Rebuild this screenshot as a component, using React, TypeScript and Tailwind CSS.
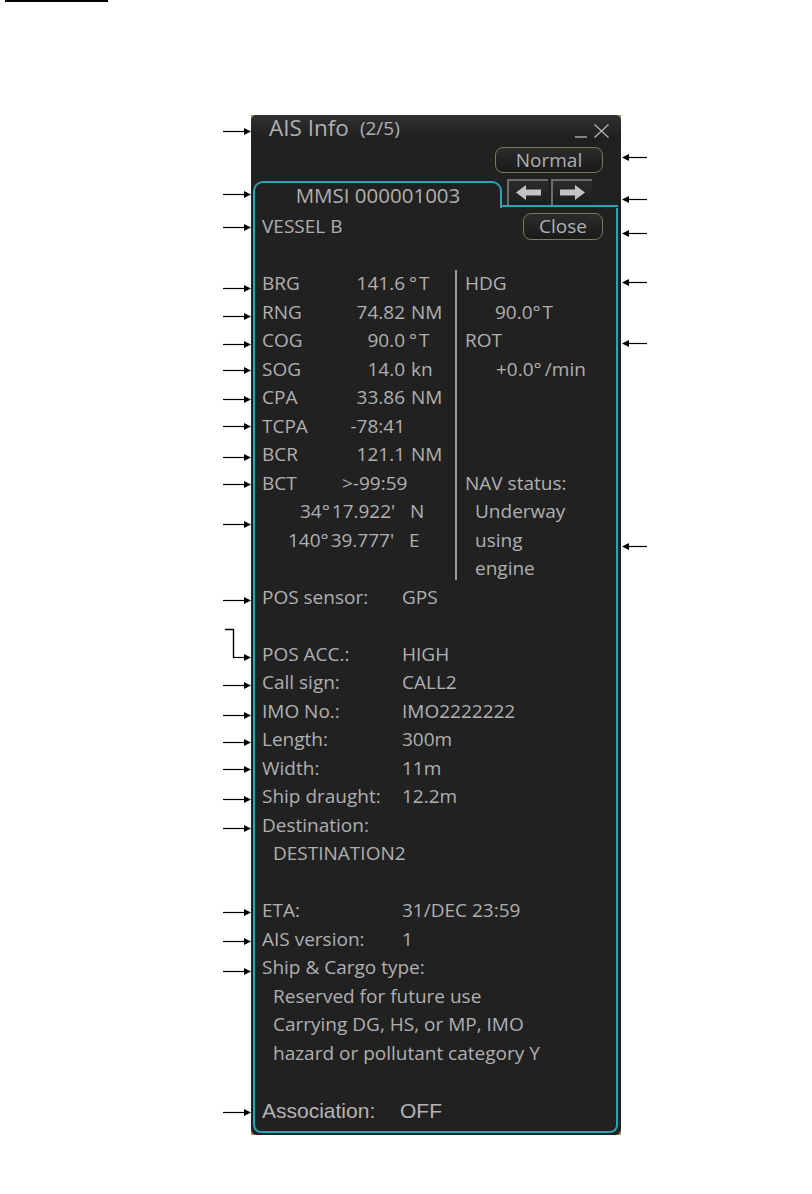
import React from "react";

const TEAL = "border-[#2ba3b4]";

const NAV_LEFT: [string, string, string][] = [
  ["BRG", "141.6", "°\u200aT"],
  ["RNG", "74.82", "NM"],
  ["COG", "90.0", "°\u200aT"],
  ["SOG", "14.0", "kn"],
  ["CPA", "33.86", "NM"],
  ["TCPA", "-78:41", ""],
  ["BCR", "121.1", "NM"],
  ["BCT", ">-99:59", ""],
];

const DETAILS: [string, string][] = [
  ["Call sign:", "CALL2"],
  ["IMO No.:", "IMO2222222"],
  ["Length:", "300m"],
  ["Width:", "11m"],
  ["Ship draught:", "12.2m"],
];

// annotation arrows, y measured from the top of the panel
const LEFT_ARROWS = [16, 79, 112, 173, 201, 229, 255, 284, 311, 342, 369, 409, 485, 542, 570, 600, 627, 654, 684, 713, 797, 826, 856, 997];
const RIGHT_ARROWS = [42, 84, 118, 167, 228, 431];

function LeftCallouts() {
  return (
    <svg width="29" height="1020" viewBox="0 0 29 1020" className="shrink-0">
      {LEFT_ARROWS.map(y => (
        <g key={y}>
          <line x1={y === 542 ? 11 : 1} y1={y + 0.5} x2={23} y2={y + 0.5} stroke="#000" strokeWidth="1.2" />
          <polygon points={`22,${y - 3} 29,${y + 0.5} 22,${y + 4}`} fill="#000" />
        </g>
      ))}
      <polyline points="3,514.5 11.5,514.5 11.5,542.5" fill="none" stroke="#000" strokeWidth="1.4" />
    </svg>
  );
}

function RightCallouts() {
  return (
    <svg width="27" height="1020" viewBox="0 0 27 1020" className="shrink-0">
      {RIGHT_ARROWS.map(y => (
        <g key={y}>
          <line x1={7} y1={y + 0.5} x2={26} y2={y + 0.5} stroke="#000" strokeWidth="1.2" />
          <polygon points={`8,${y - 3} 1,${y + 0.5} 8,${y + 4}`} fill="#000" />
        </g>
      ))}
    </svg>
  );
}

function ArrowButton({ dir }: { dir: "left" | "right" }) {
  return (
    <div className="w-[41px] h-[26px] flex items-center justify-center border-t-2 border-l-2 border-[#6c6c6c] bg-gradient-to-b from-[#2c2c2c] to-[#1c1c1c]">
      <svg width="25" height="15" viewBox="0 0 25 15">
        {dir === "left" ? (
          <polygon points="0,7.5 10,0 10,4.5 25,4.5 25,10.5 10,10.5 10,15" fill="#c4c4c4" />
        ) : (
          <polygon points="25,7.5 15,0 15,4.5 0,4.5 0,10.5 15,10.5 15,15" fill="#c4c4c4" />
        )}
      </svg>
    </div>
  );
}

const Row = ({ children, className = "" }: { children?: React.ReactNode; className?: string }) => (
  <div className={`flex h-[28.5px] items-center whitespace-pre ${className}`}>{children}</div>
);

export default function App() {
  return (
    <div className="w-[812px] h-[1194px] bg-white font-['Open_Sans','Noto_Sans',sans-serif]">
      <div className="ml-[5px] w-[103px] h-[2px] bg-black" />

      <div className="flex mt-[113px] ml-[222px]">
        <LeftCallouts />

        {/* AIS Info panel */}
        <div className="w-[370px] h-[1020px] bg-[#a3946f] shrink-0">
          <div className="w-full h-full rounded-[6px] bg-[#212121] flex flex-col text-[#b0b0b0] text-[19px]">
            {/* title bar */}
            <div className="h-[26px] flex items-center pl-[18px] pr-[12px] rounded-t-[6px] bg-gradient-to-b from-[#303030] to-[#1e1e1e]">
              <span className="text-[22.5px] leading-[26px]">AIS Info</span>
              <span className="ml-[11px] text-[19px] leading-[26px]">(2/5)</span>
              <div className="ml-auto flex items-end gap-[7px] pt-[6px]">
                <svg width="12" height="14" viewBox="0 0 12 14">
                  <line x1="0" y1="13" x2="12" y2="13" stroke="#b8b8b8" strokeWidth="1.3" />
                </svg>
                <svg width="15" height="14" viewBox="0 0 15 14">
                  <line x1="0.5" y1="0.5" x2="14.5" y2="13.5" stroke="#b8b8b8" strokeWidth="1.2" />
                  <line x1="14.5" y1="0.5" x2="0.5" y2="13.5" stroke="#b8b8b8" strokeWidth="1.2" />
                </svg>
              </div>
            </div>

            {/* Normal button */}
            <div className="flex justify-end pr-[18px] pt-[6px]">
              <button className="w-[108px] h-[26px] rounded-[8px] border-[1.5px] border-[#7c7760] bg-gradient-to-b from-[#2c2c2c] to-[#1a1a1a] text-[19px] leading-none text-[#b0b0b0]">
                Normal
              </button>
            </div>

            {/* tab row */}
            <div className="flex mt-[8px] ml-[2px] mr-[3px]">
              <div className={`w-[249px] h-[26.5px] border-t-2 border-l-2 border-r-2 ${TEAL} rounded-t-[10px] flex items-center justify-center text-[20.5px] leading-none pl-[1px]`}>
                MMSI 000001003
              </div>
              <div className={`flex-1 h-[26.5px] border-b-2 ${TEAL} flex items-end gap-[3px] pl-[5px] -mt-[1px]`}>
                <ArrowButton dir="left" />
                <ArrowButton dir="right" />
              </div>
            </div>

            {/* content */}
            <div className={`flex-1 ml-[2px] mr-[3px] mb-[2px] border-l-2 border-r-2 border-b-2 ${TEAL} rounded-b-[8px] pt-[5px] leading-none`}>
              <Row className="pl-[7px] pr-[13px] justify-between">
                <span>VESSEL B</span>
                <button className="w-[80px] h-[27px] rounded-[8px] border-[1.5px] border-[#7c7760] bg-gradient-to-b from-[#2c2c2c] to-[#1a1a1a] text-[19px] leading-none text-[#b0b0b0]">
                  Close
                </button>
              </Row>
              <Row />

              <div className="flex">
                <div className="w-[200px] pl-[7px]">
                  {NAV_LEFT.map(([label, value, unit]) => (
                    <Row key={label}>
                      <span className="w-[80px]">{label}</span>
                      <span className="w-[63px] text-right">{value}</span>
                      {unit && <span className={unit === "NM" || unit === "kn" ? "ml-[6px]" : "ml-[4px]"}>{unit}</span>}
                    </Row>
                  ))}
                  <Row className="pl-[38px]">{"34°\u200a17.922'   N"}</Row>
                  <Row className="pl-[26px]">{"140°\u200a39.777'   E"}</Row>
                  <Row />
                </div>
                <div className="w-[2px] bg-[#9a9a9a] mb-[3px]" />
                <div className="pl-[8px]">
                  <Row>HDG</Row>
                  <Row className="pl-[30px]">{"90.0°\u200aT"}</Row>
                  <Row>ROT</Row>
                  <Row className="pl-[31px]">{"+0.0°\u2009/min"}</Row>
                  <Row />
                  <Row />
                  <Row />
                  <Row>NAV status:</Row>
                  <Row className="pl-[10px]">Underway</Row>
                  <Row className="pl-[10px]">using</Row>
                  <Row className="pl-[10px]">engine</Row>
                </div>
              </div>

              <div className="pl-[7px]">
                <Row>
                  <span className="w-[140px]">POS sensor:</span>
                  <span>GPS</span>
                </Row>
                <Row />
                <Row>
                  <span className="w-[140px]">POS ACC.:</span>
                  <span>HIGH</span>
                </Row>
                {DETAILS.map(([label, value]) => (
                  <Row key={label}>
                    <span className="w-[140px]">{label}</span>
                    <span>{value}</span>
                  </Row>
                ))}
                <Row>Destination:</Row>
                <Row className="pl-[11px]">DESTINATION2</Row>
                <Row />
                <Row>
                  <span className="w-[140px]">ETA:</span>
                  <span>31/DEC 23:59</span>
                </Row>
                <Row>
                  <span className="w-[140px]">AIS version:</span>
                  <span>1</span>
                </Row>
                <Row>Ship &amp; Cargo type:</Row>
                <Row className="pl-[11px]">Reserved for future use</Row>
                <Row className="pl-[11px]">Carrying DG, HS, or MP, IMO</Row>
                <Row className="pl-[11px]">hazard or pollutant category Y</Row>
                <Row />
                <Row className="font-['Liberation_Sans',Arial,sans-serif] text-[21px] text-[#b4b4b4]">
                  <span className="w-[138px]">Association:</span>
                  <span>OFF</span>
                </Row>
              </div>
            </div>
          </div>
        </div>

        <RightCallouts />
      </div>
    </div>
  );
}
